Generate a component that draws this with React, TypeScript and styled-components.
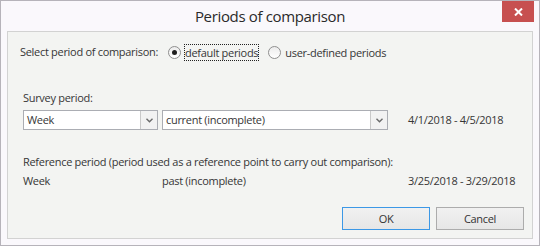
import styled, { createGlobalStyle } from 'styled-components';

const GlobalStyle = createGlobalStyle`
  html, body {
    margin: 0;
    padding: 0;
    background: #ffffff;
  }
  * {
    box-sizing: border-box;
  }
`;

const Window = styled.div`
  width: 540px;
  height: 246px;
  display: flex;
  flex-direction: column;
  border: 1px solid #b6b3ba;
  background: #faf8fc;
  font-family: 'Open Sans', 'Noto Sans', sans-serif;
  font-size: 11px;
  letter-spacing: -0.3px;
  color: #363636;
`;

const TitleBar = styled.div`
  height: 30px;
  display: grid;
  grid-template-columns: 1fr auto 1fr;
  align-items: start;
`;

const Title = styled.div`
  grid-column: 2;
  margin-top: 5px;
  font-size: 15px;
  letter-spacing: -0.35px;
  color: #2a2a2a;
  line-height: 20px;
`;

const CloseButton = styled.button`
  grid-column: 3;
  justify-self: end;
  margin-right: 5px;
  width: 32px;
  height: 21px;
  border: none;
  padding: 0;
  background: #c75050;
  display: flex;
  align-items: center;
  justify-content: center;
`;

const Panel = styled.div`
  flex: 1;
  margin: 0 6px 6px;
  border: 1px solid #d2d2d2;
  background: #f3f4f2;
  display: flex;
  flex-direction: column;
  padding: 10px 8px 8px 12px;
`;

const ChoiceRow = styled.div`
  height: 20px;
  display: flex;
  align-items: center;
`;

const ChoiceLabel = styled.span`
  width: 148px;
  line-height: 16px;
`;

const RadioOption = styled.label<{ $gap: number }>`
  display: flex;
  align-items: center;
  gap: 3px;
  margin-right: ${(p) => p.$gap}px;
  line-height: 15px;
`;

const RadioCircle = styled.span<{ $checked?: boolean }>`
  width: 13px;
  height: 13px;
  border-radius: 50%;
  border: 1px solid #8f8f8f;
  background: linear-gradient(#ececec, #ffffff);
  display: flex;
  align-items: center;
  justify-content: center;

  &::after {
    content: '';
    width: 5px;
    height: 5px;
    border-radius: 50%;
    background: ${(p) => (p.$checked ? '#1e1e1e' : 'transparent')};
  }
`;

const RadioText = styled.span<{ $focused?: boolean }>`
  padding: 1px 1px;
  outline: ${(p) => (p.$focused ? '1px dotted #222' : 'none')};
  outline-offset: -1px;
`;

const Section = styled.div<{ $top: number }>`
  margin-top: ${(p) => p.$top}px;
  margin-left: 3px;
`;

const SectionLabel = styled.div`
  height: 16px;
  line-height: 16px;
`;

const PeriodGrid = styled.div<{ $top: number }>`
  margin-top: ${(p) => p.$top}px;
  display: grid;
  grid-template-columns: 135px 226px auto;
  column-gap: 4px;
  align-items: center;
`;

const DateText = styled.span`
  margin-left: 16px;
  line-height: 16px;
`;

const PlainCell = styled.span`
  line-height: 16px;
`;

const Combo = styled.div`
  height: 20px;
  display: flex;
  border: 1px solid #abadb3;
  background: #ffffff;
`;

const ComboValue = styled.span`
  flex: 1;
  padding-left: 3px;
  line-height: 18px;
  white-space: nowrap;
  overflow: hidden;
`;

const ComboArrow = styled.span`
  width: 17px;
  border-left: 1px solid #c9c9c9;
  background: #f2f2f2;
  display: flex;
  align-items: center;
  justify-content: center;
`;

const ButtonRow = styled.div`
  margin-top: auto;
  display: flex;
  justify-content: flex-end;
  gap: 6px;
`;

const DialogButton = styled.button<{ $default?: boolean }>`
  width: 88px;
  height: 23px;
  padding: 0;
  font-family: inherit;
  font-size: 11px;
  letter-spacing: -0.3px;
  color: #333;
  border: 1px solid ${(p) => (p.$default ? '#3c98e6' : '#acacac')};
  background: linear-gradient(#f1f1f1, #e6e6e6);
`;

const Chevron = () => (
  <svg width="7" height="5" viewBox="0 0 7 5">
    <polyline points="0.5,0.8 3.5,3.8 6.5,0.8" fill="none" stroke="#6a6a6a" strokeWidth="1.4" />
  </svg>
);

const CloseIcon = () => (
  <svg width="9" height="8" viewBox="0 0 9 8">
    <path d="M1 0.5 L8 7.5 M8 0.5 L1 7.5" stroke="#ffffff" strokeWidth="2" />
  </svg>
);

export default function App() {
  return (
    <>
      <GlobalStyle />
      <Window>
        <TitleBar>
          <Title>Periods of comparison</Title>
          <CloseButton aria-label="Close">
            <CloseIcon />
          </CloseButton>
        </TitleBar>
        <Panel>
          <ChoiceRow>
            <ChoiceLabel>Select period of comparison:</ChoiceLabel>
            <RadioOption $gap={9}>
              <RadioCircle $checked />
              <RadioText $focused>default periods</RadioText>
            </RadioOption>
            <RadioOption $gap={0}>
              <RadioCircle />
              <RadioText>user-defined periods</RadioText>
            </RadioOption>
          </ChoiceRow>

          <Section $top={28}>
            <SectionLabel>Survey period:</SectionLabel>
            <PeriodGrid $top={4}>
              <Combo>
                <ComboValue>Week</ComboValue>
                <ComboArrow>
                  <Chevron />
                </ComboArrow>
              </Combo>
              <Combo>
                <ComboValue>current (incomplete)</ComboValue>
                <ComboArrow>
                  <Chevron />
                </ComboArrow>
              </Combo>
              <DateText>4/1/2018 - 4/5/2018</DateText>
            </PeriodGrid>
          </Section>

          <Section $top={24}>
            <SectionLabel>
              Reference period (period used as a reference point to carry out comparison):
            </SectionLabel>
            <PeriodGrid $top={3}>
              <PlainCell>Week</PlainCell>
              <PlainCell>past (incomplete)</PlainCell>
              <DateText>3/25/2018 - 3/29/2018</DateText>
            </PeriodGrid>
          </Section>

          <ButtonRow>
            <DialogButton $default>OK</DialogButton>
            <DialogButton>Cancel</DialogButton>
          </ButtonRow>
        </Panel>
      </Window>
    </>
  );
}
